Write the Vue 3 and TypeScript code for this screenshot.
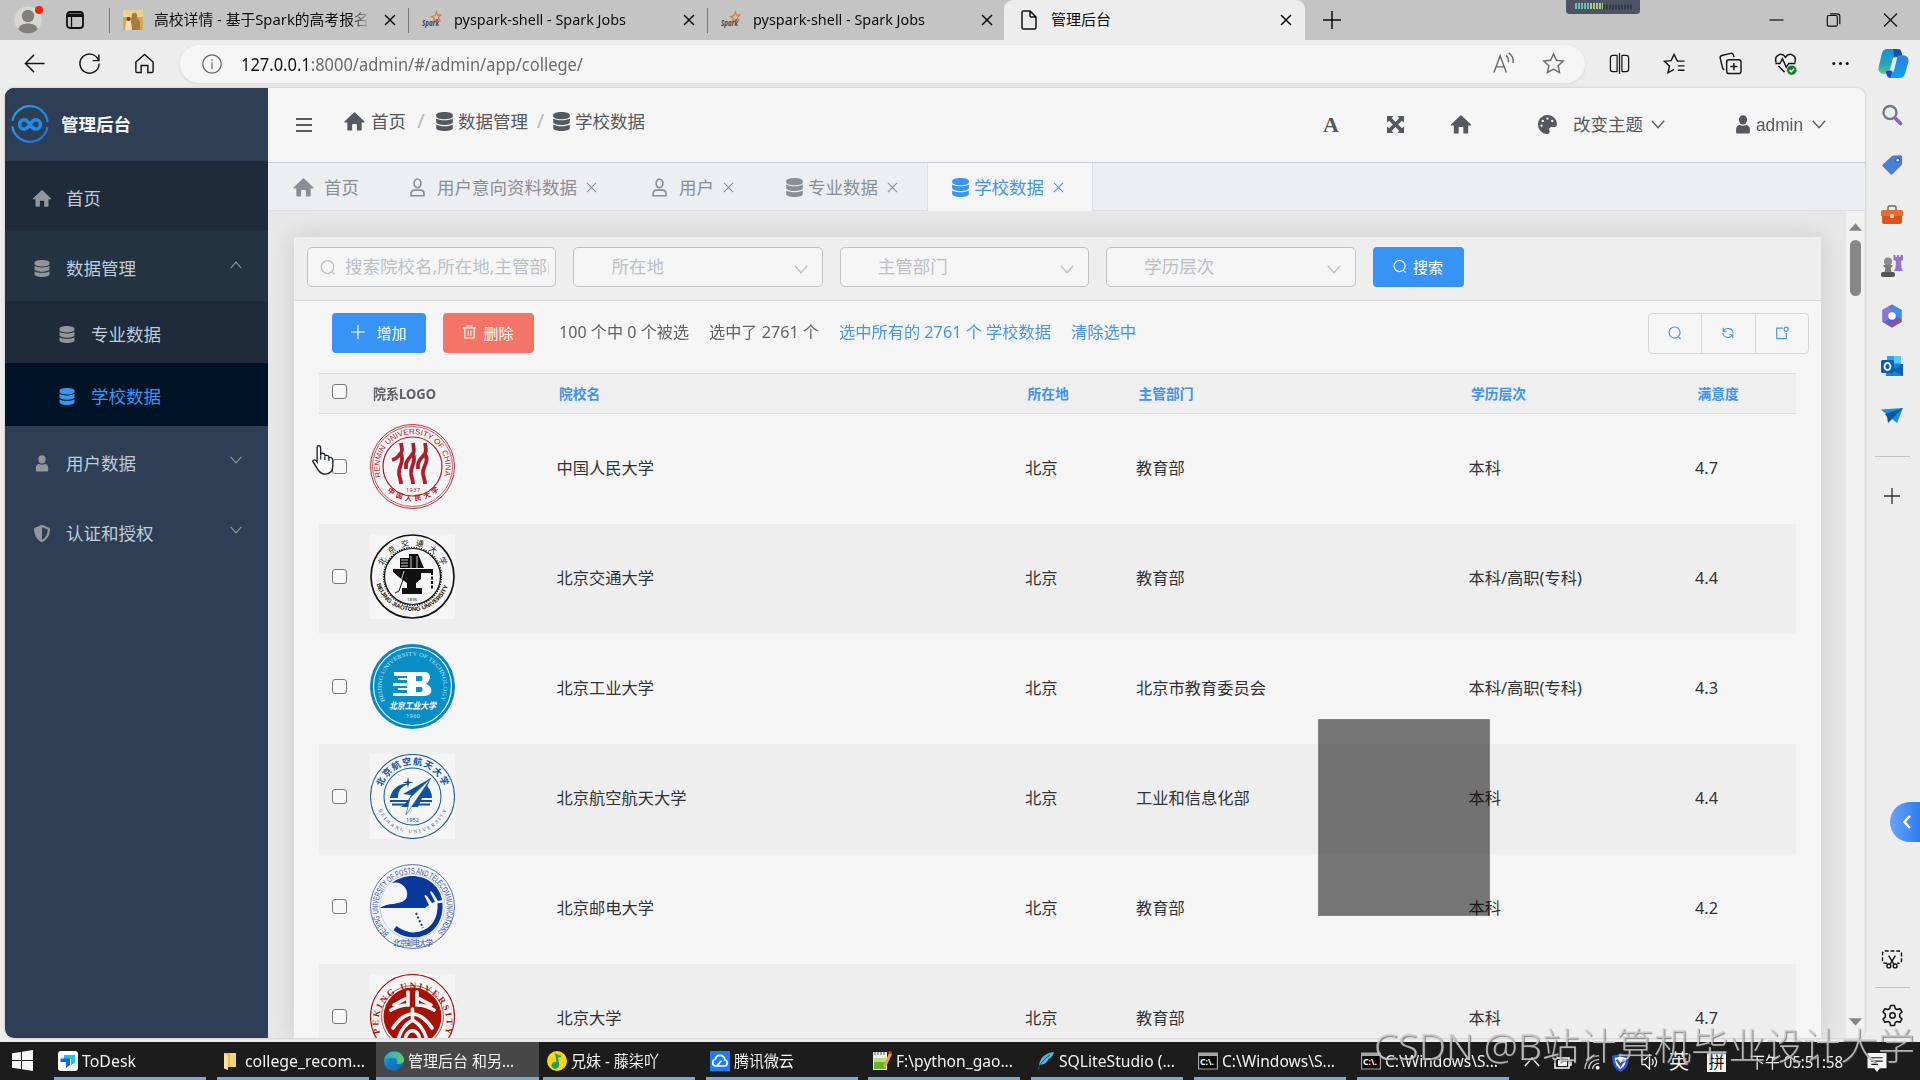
<script setup lang="ts">
import type { Directive } from 'vue'

// Condenses or widens a label so that it takes exactly the given number of pixels.
const vFit: Directive<HTMLElement, number> = {
  mounted(el, binding) {
    const natural = el.getBoundingClientRect().width
    if (!natural) return
    el.style.transform = `scaleX(${binding.value / natural})`
    el.style.marginRight = `${binding.value - natural}px`
  },
}

interface College { name: string; city: string; dept: string; level: string; score: string }
const colleges: College[] = [
  { name: '中国人民大学', city: '北京', dept: '教育部', level: '本科', score: '4.7' },
  { name: '北京交通大学', city: '北京', dept: '教育部', level: '本科/高职(专科)', score: '4.4' },
  { name: '北京工业大学', city: '北京', dept: '北京市教育委员会', level: '本科/高职(专科)', score: '4.3' },
  { name: '北京航空航天大学', city: '北京', dept: '工业和信息化部', level: '本科', score: '4.4' },
  { name: '北京邮电大学', city: '北京', dept: '教育部', level: '本科', score: '4.2' },
  { name: '北京大学', city: '北京', dept: '教育部', level: '本科', score: '4.7' },
]
const selects: string[] = ['所在地', '主管部门', '学历层次']

interface Task { icon: string; label: string; width: number; active?: boolean }
const tasks: Task[] = [
  { icon: 'todesk', label: 'ToDesk', width: 54 },
  { icon: 'folder', label: 'college_recom...', width: 120 },
  { icon: 'edge', label: '管理后台 和另...', width: 106, active: true },
  { icon: 'music', label: '兄妹 - 藤柒吖', width: 88 },
  { icon: 'cloud', label: '腾讯微云', width: 60 },
  { icon: 'notepad', label: 'F:\\python_gao...', width: 117 },
  { icon: 'feather', label: 'SQLiteStudio (...', width: 116 },
  { icon: 'cmd', label: 'C:\\Windows\\S...', width: 113 },
  { icon: 'cmd', label: 'C:\\Windows\\S...', width: 113 },
]
const railIcons: string[] = ['r-search', 'r-tag', 'r-tools', 'r-chess', 'r-office', 'r-outlook', 'r-plane']
</script>

<template>
  <div class="screen">
    <svg class="sprite" width="0" height="0">
      <defs>
        <linearGradient id="gLogo" x1="0" y1="0" x2="1" y2="1"><stop offset="0" stop-color="#25a5e0" /><stop offset="1" stop-color="#1e6fe6" /></linearGradient>
        <linearGradient id="gCop1" x1="0" y1="0" x2="0" y2="1"><stop offset="0" stop-color="#1390d8" /><stop offset=".6" stop-color="#2aa5b8" /><stop offset="1" stop-color="#5cc58b" /></linearGradient>
        <linearGradient id="gCop2" x1="0" y1="0" x2="0" y2="1"><stop offset="0" stop-color="#2f7fe0" /><stop offset="1" stop-color="#0aa2f5" /></linearGradient>
        <linearGradient id="gEdge" x1="0" y1="0" x2="1" y2="1"><stop offset="0" stop-color="#1fa3dd" /><stop offset="1" stop-color="#0c59a4" /></linearGradient>
        <linearGradient id="gEdge2" x1="0" y1="0" x2="1" y2="0"><stop offset="0" stop-color="#2aa8dd" /><stop offset="1" stop-color="#58d065" /></linearGradient>
      </defs>
      <symbol id="home" viewBox="0 0 24 24"><path d="M12 1.500a1.300 1.300 0 0 0-.9.4L.8 11.600c-.7.7-.4 1.500.6 1.500h2.400V21c0 .9.4 1.300 1.200 1.300h4.300v-6.600c0-.6.3-.9.9-.9h3.600c.6 0 .9.3.9.9v6.600H19c.8 0 1.200-.4 1.200-1.300v-7.900h2.400c1 0 1.300-.8.6-1.500L12.900 1.900a1.300 1.300 0 0 0-.9-.4z" /></symbol>
      <symbol id="db" viewBox="0 0 448 512"><path d="M448 73.143v45.714C448 159.143 347.667 192 224 192S0 159.143 0 118.857V73.143C0 32.857 100.333 0 224 0s224 32.857 224 73.143zM448 176v102.857C448 319.143 347.667 352 224 352S0 319.143 0 278.857V176c48.125 33.143 136.208 48.572 224 48.572S399.874 209.143 448 176zm0 160v102.857C448 479.143 347.667 512 224 512S0 479.143 0 438.857V336c48.125 33.143 136.208 48.572 224 48.572S399.874 369.143 448 336z" /></symbol>
      <symbol id="user" viewBox="0 0 16 22"><ellipse cx="8" cy="5.600" rx="4.700" ry="5.400" /><path d="M0 20v-3.500c0-3.200 2-4.700 4.500-4.900 2.200 1.200 4.800 1.200 7 0 2.500.2 4.500 1.700 4.500 4.900V20c0 1-.5 1.500-1.500 1.500h-13C.5 21.500 0 21 0 20z" /></symbol>
      <symbol id="userline" viewBox="0 0 18 22"><g fill="none" stroke="currentColor" stroke-width="1.900"><ellipse cx="9" cy="6.200" rx="4" ry="5" /><path d="M1.500 20.500v-2.200c0-2.600 1.500-4.300 4-4.300h7c2.500 0 4 1.700 4 4.300v2.200z" /></g></symbol>
      <symbol id="shield" viewBox="0 0 512 512"><path d="M466.500 83.700l-192-80a48.150 48.150 0 0 0-36.900 0l-192 80C27.700 91.100 16 108.600 16 128c0 198.500 114.500 335.700 221.500 380.300 11.800 4.900 25.100 4.900 36.900 0C360.100 472.600 496 349.300 496 128c0-19.400-11.700-36.900-29.500-44.300zM256.100 446.300l-.1-381 175.900 73.300c-3.300 151.400-82.100 261.100-175.800 307.700z" /></symbol>
      <symbol id="palette" viewBox="0 0 512 512"><path d="M204.300 5C104.900 24.400 24.800 104.300 5.200 203.400c-37 187 131.700 326.400 258.800 306.700 41.200-6.400 61.400-54.600 42.500-91.700-23.100-45.400 9.900-98.400 60.900-98.400h79.700c35.800 0 64.800-29.600 64.900-65.300C511.500 97.100 368.100-26.900 204.300 5zM96 320c-17.700 0-32-14.300-32-32s14.300-32 32-32 32 14.300 32 32-14.300 32-32 32zm32-128c-17.700 0-32-14.300-32-32s14.300-32 32-32 32 14.300 32 32-14.300 32-32 32zm128-64c-17.700 0-32-14.300-32-32s14.300-32 32-32 32 14.300 32 32-14.300 32-32 32zm128 64c-17.700 0-32-14.300-32-32s14.300-32 32-32 32 14.300 32 32-14.300 32-32 32z" /></symbol>
      <symbol id="expand" viewBox="0 0 18 18"><path d="M0 0h7L5 2.200 9 6.400l4-4.200L11 0h7v7l-2.200-2-4 4 4 4 2.200-2v7h-7l2-2.200-4-4.200-4 4.200L7 18H0v-7l2.200 2 4-4-4-4L0 7z" /></symbol>
      <symbol id="down" viewBox="0 0 14 9"><path d="M.8.8 7 7.800 13.200.8" fill="none" stroke="currentColor" stroke-width="1.300" /></symbol>
      <symbol id="up" viewBox="0 0 14 9"><path d="M.8 8.200 7 1.200 13.200 8.200" fill="none" stroke="currentColor" stroke-width="1.300" /></symbol>
      <symbol id="cross" viewBox="0 0 12 12"><path d="M1 1 11 11M11 1 1 11" fill="none" stroke="currentColor" stroke-width="1.500" /></symbol>
      <symbol id="thincross" viewBox="0 0 12 12"><path d="M1 1 11 11M11 1 1 11" fill="none" stroke="currentColor" stroke-width="1.200" /></symbol>
      <symbol id="lens" viewBox="0 0 16 16"><g fill="none" stroke="currentColor" stroke-width="1.300"><circle cx="7.500" cy="7.500" r="6.300" /><path d="M11.800 12.200 14.500 15" /></g></symbol>
      <symbol id="plus" viewBox="0 0 18 18"><path d="M9 0v18M0 9h18" fill="none" stroke="currentColor" stroke-width="1.500" /></symbol>
      <symbol id="spark" viewBox="0 0 20 20"><path d="m14.500 2 1 3.200 3.300-.2-2.400 2.500 1.500 3-3.100-1.100L12 11.500l.2-3.200-2.700-1.700 3.300-.9z" fill="none" stroke="#dc7a3c" stroke-width="1.200" /><text x="0" y="15.500" font-size="9" font-weight="bold" font-style="italic" fill="#44464a" textLength="17" lengthAdjust="spacingAndGlyphs">Spark</text></symbol>

      <symbol id="todesk" viewBox="0 0 20 20"><rect width="20" height="20" rx="3" fill="#fff" /><path d="M6 4h11v8l-4 2V8H6z" fill="#21c5d8" /><path d="M2.500 7.500H12V14l-4 3v-6H2.500z" fill="#1662f0" /></symbol>
      <symbol id="folder" viewBox="0 0 20 20"><path d="M3 2h10v14H3z" fill="#e9bd52" /><path d="M9 2h6v14H9z" fill="#f7d679" /><path d="m3 2 4 3v14l-4-1.500z" fill="#fbe29b" /></symbol>
      <symbol id="edge" viewBox="0 0 20 20"><circle cx="10" cy="10" r="10" fill="url(#gEdge)" /><path d="M.5 8C2-.5 18-3 20 8.500c.3 4-3.500 5.500-7.500 4.300 1.500-3 .5-6-4-6.300C5 6.400 2 7.500.5 10z" fill="url(#gEdge2)" /><path d="M7 10c-2 4 2 8.500 7.500 7.800C8 22 1.500 15 5.500 9c1-1.300 2-1.500 4-1.300-1.300.3-2 1-2.500 2.300z" fill="#1276c9" /></symbol>
      <symbol id="music" viewBox="0 0 20 20"><circle cx="10" cy="10" r="10" fill="#fbd512" /><path d="M8 1.500c2.500 3 4.500 3 6 2.800v2c-1.300.2-2 .1-3-.3l1.200 7.500c.3 5.500-7.700 5.500-7.700.8 0-3 2.800-4.100 5-3.300z" fill="#1e9f61" /></symbol>
      <symbol id="cloud" viewBox="0 0 20 20"><rect width="20" height="20" fill="#1c7cf2" /><path d="M6 15h8c4 0 4.300-5.200 1-6C14 3 6.500 3 5.500 8 1.500 9 2 15 6 15c3 0 3-5 6-5" fill="none" stroke="#fff" stroke-width="1.700" /></symbol>
      <symbol id="notepad" viewBox="0 0 20 20"><path d="M1 1h14v18H1z" fill="#eef0e4" /><path d="M2 9h12v9H2z" fill="#65b529" /><path d="M2 7h12v4H2z" fill="#bcdc82" /><path d="M3 1v3m3-3v3m3-3v3m3-3v3" stroke="#555" /><path d="m17 2 3 1-6 13-2 2v-4z" fill="#f1a32a" /><path d="m17 0 3 1-.8 2L16.500 2z" fill="#d43a2f" /></symbol>
      <symbol id="feather" viewBox="0 0 20 20"><path d="M19 1C10 2 5 7 4 14c6 0 9-4 9.500-6l1.500-.5C17 6 18 4 19 1z" fill="#55b6dc" /><path d="M15 4C9 8 5 12 3 19" stroke="#19577c" fill="none" /></symbol>
      <symbol id="cmd" viewBox="0 0 20 20"><rect y="1.500" width="20" height="17" fill="#a6a6a6" /><rect x="1.200" y="5" width="17.600" height="12.500" fill="#050505" /><text x="2" y="14" font-size="8" font-weight="bold" fill="#fff" textLength="14" lengthAdjust="spacingAndGlyphs">C:\.</text></symbol>

      <symbol id="r-search" viewBox="0 0 22 22"><circle cx="9" cy="8.500" r="6.500" fill="#e9edf2" stroke="#747a80" stroke-width="2.400" /><path d="m14 14 5.500 5.500" stroke="#8c62c9" stroke-width="3.600" stroke-linecap="round" /></symbol>
      <symbol id="r-tag" viewBox="0 0 22 22"><path d="m12.500 1.500 7-.2c1 0 1.700.7 1.700 1.700l-.1 6.500c0 .7-.2 1.300-.7 1.800l-8.900 8.900c-.6.6-1.400.6-2 0L1.800 12.500c-.6-.6-.6-1.500 0-2.100l9-8.200c.5-.5 1-.7 1.700-.7z" fill="#4b7ed8" /><circle cx="16.700" cy="6.200" r="2" fill="#dfe9fb" stroke="#224a9c" /></symbol>
      <symbol id="r-tools" viewBox="0 0 22 22"><path d="M7 6V3.500C7 2.500 7.500 2 8.500 2h5c1 0 1.500.5 1.500 1.500V6" fill="none" stroke="#6b6b6b" stroke-width="1.600" /><path d="M1 11h20v7c0 1.300-.7 2-2 2H3c-1.300 0-2-.7-2-2z" fill="#d8551c" /><path d="M0 8c0-1.300.7-2 2-2h18c1.300 0 2 .7 2 2v4H0z" fill="#ee6a28" /><rect x="9" y="10" width="4" height="4" rx="1" fill="#ffc9a5" /></symbol>
      <symbol id="r-chess" viewBox="0 0 22 22"><path d="M12.500 0h2v2h1.500V0h2v2h1.500V0H22v5l-2 1 .5 7 1.500 3h-9l1.500-3L15 6l-2.500-1z" fill="#9a70cb" /><circle cx="7" cy="6.500" r="4" fill="#8d8d8d" /><path d="M2.500 10h9v1.500L9.500 13l1 4H3.500l1-4-2-1.500z" fill="#7a7a7a" /><rect y="17" width="14" height="5" rx="2" fill="#555" /></symbol>
      <symbol id="r-office" viewBox="0 0 22 24"><path d="M11 .5 20.500 6v12L11 23.500 1.500 18V6z" fill="#5a62cf" /><path d="M11 .5 20.500 6v9l-6.500-3-3-4-2 1z" fill="#3f8fe6" /><path d="M1.500 18V6L9 1.500l2 6.500-4 4v4z" fill="#8d74d4" /><path d="M20.500 15v3L11 23.500 5 20l9-3.500z" fill="#8a4fae" /><circle cx="11" cy="12" r="3.800" fill="#fff" /></symbol>
      <symbol id="r-outlook" viewBox="0 0 22 22"><path d="M6 1h14v10H6z" fill="#2aa6ea" /><path d="M13 1h7v7h-7z" fill="#54cdf5" /><path d="M5 9h17v12H5z" fill="#1583d6" /><path d="m22 9-10 6 10 6z" fill="#0c62b0" /><rect y="5" width="13" height="13" rx="1.500" fill="#0a5eb6" /><ellipse cx="6.500" cy="11.500" rx="3" ry="3.500" fill="none" stroke="#fff" stroke-width="1.800" /></symbol>
      <symbol id="r-plane" viewBox="0 0 22 22"><path d="M0 4.500 22 3l-6 15-5-4z" fill="#1d8de0" /><path d="m4 9 18-6L7 18l-1-6z" fill="#0c5a9e" /><path d="m7 18 15-15-11 11z" fill="#3fb5f2" /></symbol>
    </svg>

    <header class="tabbar">
      <svg class="avatar" viewBox="0 0 28 28"><circle cx="14" cy="14" r="13.500" fill="#d9d7d1" /><circle cx="14" cy="10" r="6.200" fill="#82807c" /><path d="M4.500 23.500c0-8 19-8 19 0a13.500 13.500 0 0 1-19 0z" fill="#82807c" /><circle cx="25" cy="4" r="4" fill="#ee2211" /></svg>
      <svg class="workspace" viewBox="0 0 18 18"><rect x="1" y="1" width="16" height="16" rx="3" fill="none" stroke="#111" stroke-width="1.800" /><path d="M1 2.500h16V6H1z" fill="#111" /><path d="M5.500 6v11" stroke="#111" stroke-width="1.300" /></svg>
      <i class="bar"></i>
      <div class="tab">
        <svg class="fav" viewBox="0 0 20 20"><rect width="20" height="20" fill="#dba453" /><path d="M0 0h20v7H0z" fill="#efd092" /><path d="M9 4c3-3 6 0 5 3l3 5v8H9l-1-9z" fill="#a77a3e" /><path d="M3 12c2-4 4-4 5 0l1 8H2z" fill="#f5dfae" /><circle cx="5.500" cy="9" r="2" fill="#6b4524" /></svg>
        <span class="title fade">高校详情 - 基于Spark的高考报名</span>
        <svg class="x"><use href="#cross" /></svg>
      </div>
      <div v-for="n in 2" :key="n" class="tab" :class="{ last: n === 2 }">
        <svg class="fav"><use href="#spark" /></svg>
        <span class="title"><span v-fit="172" class="fit">pyspark-shell - Spark Jobs</span></span>
        <svg class="x"><use href="#cross" /></svg>
      </div>
      <div class="tab active">
        <svg class="doc" viewBox="0 0 16 20"><path d="M1 2.500C1 1.500 1.500 1 2.500 1H9l6 6v10.500c0 1-.5 1.500-1.500 1.500h-11C1.500 19 1 18.500 1 17.500zM9 1v4.500C9 6.500 9.500 7 10.500 7H15" fill="none" stroke="#111" stroke-width="1.500" /></svg>
        <span class="title">管理后台</span>
        <svg class="x"><use href="#cross" /></svg>
      </div>
      <svg class="newtab"><use href="#plus" /></svg>
      <div class="winctl">
        <svg viewBox="0 0 14 14"><path d="M0 7h14" stroke="#111" stroke-width="1.200" /></svg>
        <svg viewBox="0 0 14 14"><g fill="none" stroke="#111" stroke-width="1.200"><rect x=".8" y="2.500" width="10" height="10.700" rx="1.500" /><path d="M3.500.8h7.300c1.700 0 2.500.8 2.500 2.500v8" /></g></svg>
        <svg viewBox="0 0 14 14"><path d="m.5.5 13 13m0-13-13 13" stroke="#111" stroke-width="1.200" /></svg>
      </div>
    </header>

    <div class="addressbar">
      <div class="nav"><svg viewBox="0 0 24 24"><path d="M22.500 12H2.500M11.500 3 2.500 12l9 9" /></svg></div>
      <div class="nav"><svg viewBox="0 0 24 24"><path d="M21.500 9A10 10 0 1 0 22 12M21.800 2.500V9h-6.500" /></svg></div>
      <div class="nav"><svg viewBox="0 0 24 24"><path d="M3 10.500 12 2.500l9 8V20c0 .8-.4 1.300-1.200 1.300h-4.300V14h-7v7.300H4.200c-.8 0-1.200-.5-1.200-1.300z" /></svg></div>
      <div class="pill">
        <svg class="info" viewBox="0 0 20 20"><g fill="none" stroke="#666" stroke-width="1.200"><circle cx="10" cy="10" r="9.200" /><path d="M10 8.500V15M10 5v1.700" /></g></svg>
        <span v-fit="342" class="fit url"><b>127.0.0.1</b>:8000/admin/#/admin/app/college/</span>
        <div class="cell first"><svg viewBox="0 0 24 24"><path d="M2 21.500 8.500 4 15 21.500M4.500 15.500h8M14.500 3.500c2 1.500 3 4 2.500 7M17.500 1c3.500 2.500 5 6 4.500 10.500" /></svg></div>
        <div class="cell"><svg viewBox="0 0 24 24"><path d="m12 2 3 6.600 7.200.8-5.400 4.900 1.500 7.200L12 17.900l-6.300 3.600 1.500-7.200L1.800 9.400 9 8.600z" /></svg></div>
      </div>
      <div class="tool lead"><svg viewBox="0 0 24 24"><path d="M9.500 3.500H5c-1.500 0-2.500 1-2.500 2.500v12c0 1.500 1 2.500 2.500 2.500h4.500M14.500 3.500H19c1.500 0 2.500 1 2.500 2.500v12c0 1.500-1 2.500-2.500 2.500h-4.500M9.500 3.500v17M14.500 3.500v17M12 1v22" stroke-width="1.300" /></svg></div>
      <div class="tool"><svg viewBox="0 0 24 24"><path d="M22.500 9.500H15l-3.500-7-3 6.500-7 .8 5.200 4.800-1.400 7 6.200-3.500M15.500 14.500h7M15.500 19h7M17 9.500h5.500" /></svg></div>
      <div class="tool"><svg viewBox="0 0 24 24"><rect x="8" y="8" width="15" height="14.500" rx="2.500" /><path d="M15.500 11.500v7.500M11.800 15.200h7.500M5.500 18.500C4.300 18 3.800 17.300 3.600 16L1.200 6.500C1 5 1.500 4 3 3.600L12 1.400c1.500-.3 2.500.3 3 1.600l.8 2.500" /></svg></div>
      <div class="tool"><svg viewBox="0 0 24 24"><path d="M2.300 11C-.5 3.500 8-.5 12 5.500c4-6 12.500-2 9.700 5.500M1.500 12h4.700l2.600-5 4 9 2.500-4h7M4.500 14.500l6.500 6.500" /><circle cx="18.500" cy="19" r="5" fill="#16802a" stroke="none" /><path d="m16.300 19 1.700 1.700 3-3.200" stroke="#fff" /></svg></div>
      <div class="tool"><svg viewBox="0 0 24 24"><g fill="#111" stroke="none"><circle cx="5" cy="12" r="1.600" /><circle cx="12" cy="12" r="1.600" /><circle cx="19" cy="12" r="1.600" /></g></svg></div>
      <div class="copilot"><svg viewBox="0 0 30 30"><path d="M15 1h3c3 0 4 1.500 4.500 4l.7 3h-5L11 25H6c-4 0-6-3-5.500-6L3.500 6C4.500 2.500 6 1 9 1z" fill="url(#gCop1)" /><path d="M14.500 1H19c2.500 0 3.300 1.500 4 4l.8 4h-8z" fill="#1452a0" /><path d="M19 7h5c4 0 6 3 5.500 6l-3 11c-1 3.500-2.500 5-5.500 5h-9c-2.500 0-3-1.500-3.500-4L15 23z" fill="url(#gCop2)" /><path d="M7.500 22 14 22l-2 7c-2.500 0-3.500-2-4-4z" fill="#2343d0" /><path d="m14.500 9.500 4-.5-3 12-4 .5z" fill="#e5f1fa" /></svg></div>
    </div>

    <div class="middle">
      <div class="page">
        <aside class="side">
          <div class="brand">
            <svg viewBox="0 0 38 38"><circle cx="19" cy="19" r="17.800" fill="none" stroke="url(#gLogo)" stroke-width="2.200" stroke-dasharray="50 5.900" stroke-dashoffset="-3" /><path d="M19 19.500c-2.200-3.700-4-4.700-5.800-4.700a4.600 4.600 0 0 0 0 9.200c2.300 0 3.600-1.300 5.800-4.500s3.500-4.700 5.800-4.700a4.600 4.600 0 0 1 0 9.200c-2.300 0-4-1.300-5.800-4.500z" fill="none" stroke="#1d8cea" stroke-width="3.600" /></svg>
            <strong>管理后台</strong>
          </div>
          <div class="item dark"><svg class="mi"><use href="#home" /></svg><span>首页</span></div>
          <div class="item open"><svg class="mi db"><use href="#db" /></svg><span>数据管理</span><svg class="arr"><use href="#up" /></svg></div>
          <div class="item sub"><svg class="mi db"><use href="#db" /></svg><span>专业数据</span></div>
          <div class="item sub current"><svg class="mi db"><use href="#db" /></svg><span>学校数据</span></div>
          <div class="item"><svg class="mi db"><use href="#user" /></svg><span>用户数据</span><svg class="arr"><use href="#down" /></svg></div>
          <div class="item"><svg class="mi db"><use href="#shield" /></svg><span>认证和授权</span><svg class="arr"><use href="#down" /></svg></div>
        </aside>

        <section class="main">
          <div class="top">
            <svg class="burger" viewBox="0 0 16 16"><path d="M0 2h16M0 8h16M0 14h16" stroke="#55585e" stroke-width="2.200" /></svg>
            <nav class="crumbs">
              <svg class="hm"><use href="#home" /></svg><span class="first">首页</span><i>/</i>
              <svg class="dbi"><use href="#db" /></svg><span>数据管理</span><i class="tight">/</i>
              <svg class="dbi"><use href="#db" /></svg><span>学校数据</span>
            </nav>
            <div class="acts">
              <span class="glyph">A</span>
              <svg class="exp"><use href="#expand" /></svg>
              <svg class="hm2"><use href="#home" /></svg>
              <svg class="pal"><use href="#palette" /></svg>
              <span class="theme">改变主题</span><svg class="dn"><use href="#down" /></svg>
              <svg class="usr"><use href="#user" /></svg>
              <span class="adm"><span v-fit="47" class="fit">admin</span></span><svg class="dn d2"><use href="#down" /></svg>
            </div>
          </div>
          <div class="pagetabs">
            <div class="pt p1"><svg class="hm"><use href="#home" /></svg><span>首页</span></div>
            <div class="pt p2"><svg class="us"><use href="#userline" /></svg><span>用户意向资料数据</span><svg class="cx"><use href="#thincross" /></svg></div>
            <div class="pt p3"><svg class="us"><use href="#userline" /></svg><span>用户</span><svg class="cx"><use href="#thincross" /></svg></div>
            <div class="pt p4"><svg class="dbi"><use href="#db" /></svg><span>专业数据</span><svg class="cx"><use href="#thincross" /></svg></div>
            <div class="pt p5"><svg class="dbi"><use href="#db" /></svg><span>学校数据</span><svg class="cx"><use href="#thincross" /></svg></div>
          </div>

          <div class="scroller">
            <div class="card">
              <div class="search">
                <div class="field"><svg class="ln"><use href="#lens" /></svg><span>搜索院校名,所在地,主管部门</span></div>
                <div v-for="s in selects" :key="s" class="field sel"><span>{{ s }}</span><svg class="fd"><use href="#down" /></svg></div>
                <button class="btn go"><svg class="ln"><use href="#lens" /></svg>搜索</button>
              </div>
              <div class="ops">
                <button class="btn add"><svg><use href="#plus" /></svg>增加</button>
                <button class="btn del"><svg viewBox="0 0 14 15"><path d="M0 3h14M4.500 3V1h5v2M2 3v11h10V3M5.500 6v5.500M8.500 6v5.500" fill="none" stroke="#fff" stroke-width="1.200" /></svg>删除</button>
                <span class="t1"><span v-fit="130" class="fit">100 个中 0 个被选</span></span>
                <span class="t2"><span v-fit="110" class="fit">选中了 2761 个</span></span>
                <a class="t3"><span v-fit="212" class="fit">选中所有的 2761 个 学校数据</span></a>
                <a class="t4">清除选中</a>
                <div class="group">
                  <span><svg><use href="#lens" /></svg></span>
                  <span><svg viewBox="0 0 16 16"><g fill="none" stroke="currentColor" stroke-width="1.300"><path d="M2.500 2v4h4M2.800 6A6 6 0 0 1 14 8M13.500 14v-4h-4M13.200 10A6 6 0 0 1 2 8" /></g></svg></span>
                  <span><svg viewBox="0 0 16 16"><g fill="none" stroke="currentColor" stroke-width="1.300"><path d="M9 2.500H2v12h11V8" /><circle cx="12.800" cy="3.700" r="2.400" /></g></svg></span>
                </div>
              </div>
              <div class="table">
                <div class="row head">
                  <i class="check"></i><b><span v-fit="63" class="fit">院系LOGO</span></b><b class="lk">院校名</b><b class="lk">所在地</b><b class="lk">主管部门</b><b class="lk">学历层次</b><b class="lk">满意度</b>
                </div>
                <div v-for="(c, i) in colleges" :key="c.name" class="row data" :class="{ even: i % 2 }">
                  <i class="check"></i>
                  <div class="logo" :class="{ boxed: i % 2 }">
                    <svg v-if="i === 0" viewBox="0 0 85 85" color="#b0182b">
                      <g fill="none" stroke="#b0182b"><circle cx="42.500" cy="42.500" r="42" stroke-width=".9" /><circle cx="42.500" cy="42.500" r="40" stroke-width=".7" /><circle cx="42.500" cy="42.500" r="29.500" stroke-width="1.200" /></g>
                      <path id="p1" d="M11 53A33 33 0 1 1 74 53" fill="none" /><text font-size="7.600" font-family="Liberation Sans"><textPath href="#p1" startOffset="0" textLength="122" lengthAdjust="spacingAndGlyphs">RENMIN UNIVERSITY OF CHINA</textPath></text>
                      <path id="p1b" d="M15 65A38 38 0 0 0 70 65" fill="none" /><text font-size="7" font-weight="bold"><textPath href="#p1b" startOffset="3" textLength="57">中国人民大学</textPath></text>
                      <path d="M31 19c1 6 2 8-1 11-2 3-4 5-8 6M31 30c4 8-3 12-2 20 1 5 2 6 2 10M43 19c1 7 2 9-2 13-6 6-5 9-5 13M43 30c4 8-3 12-2 20 1 5 2 6 2 10M55 19c1 7 2 9-2 13-6 6-5 9-5 13M55 30c5 8-3 12-2 20 1 5 2 6 2 10" fill="none" stroke="#a8202f" stroke-width="3.800" />
                      <text x="36" y="67.500" font-size="5.500" textLength="14">1937</text>
                    </svg>
                    <svg v-else-if="i === 1" viewBox="0 0 85 85" color="#111">
                      <g fill="none" stroke="#111"><circle cx="42.500" cy="42.500" r="41.500" stroke-width="1.700" /><circle cx="42.500" cy="42.500" r="28" stroke-width="1.200" /><circle cx="42.500" cy="42.500" r="29" stroke-width="1.400" stroke-dasharray="1.200 1.300" /></g>
                      <path id="p2" d="M13 32A31.500 31.500 0 0 1 72 32" fill="none" /><text font-size="8"><textPath href="#p2" startOffset="0" textLength="76">北京交通大学</textPath></text>
                      <path id="p2b" d="M6.500 50A37.500 37.500 0 0 0 78.500 50" fill="none" /><text font-size="6" font-weight="bold" font-family="Liberation Sans"><textPath href="#p2b" startOffset="0" textLength="94">BEIJING JIAOTONG UNIVERSITY</textPath></text>
                      <path d="M30 24h9v-4h9l6 14H30zM23 35h40v4H51v6l-5 4v5h6v6H32v-6h5v-5l-7-5-7-6z" /><path d="M31 26h7M31 29h7M31 32h7M41 22v12M47 22v12M34 37l-6 20" stroke="#f5f5f5" stroke-width=".8" /><path d="m36 37-7 20-4 2" fill="none" stroke="#111" /><path d="M62 38v17" stroke="#111" stroke-width="2" stroke-dasharray="3 1.500" /><text x="37" y="67" font-size="4" textLength="10">1896</text>
                    </svg>
                    <svg v-else-if="i === 2" viewBox="0 0 85 85" color="#fff">
                      <circle cx="42.500" cy="42.500" r="42.500" fill="#0b86b8" /><circle cx="42.500" cy="42.500" r="39" fill="#078fc6" stroke="#e8f5fa" stroke-width="1.200" />
                      <path id="p3" d="M15 57A31 31 0 1 1 70 57" fill="none" /><text font-size="5.600" fill="#bfe3f0" font-family="Liberation Serif"><textPath href="#p3" startOffset="0" textLength="126" lengthAdjust="spacingAndGlyphs">BEIJING UNIVERSITY OF TECHNOLOGY</textPath></text>
                      <path d="M24 28h31c7 0 6 9 1 12 8 3 7 12-2 12H23v-3h14v-3h-9v-2h9v-2H23v-3h14v-3h-9v-2h9v-2H24z" /><path d="M46 32h5c2 0 2 5 0 5h-5zM46 43h5c2 0 2 5 0 5h-5z" fill="#078fc6" /><text x="19" y="65" font-size="9" font-weight="bold" font-style="italic" textLength="47" lengthAdjust="spacingAndGlyphs">北京工业大学</text><text x="36" y="74" font-size="5.500" textLength="14" fill="#c6e5f0">1960</text>
                    </svg>
                    <svg v-else-if="i === 3" viewBox="0 0 85 85" color="#10529a">
                      <g fill="none" stroke="#23609a"><circle cx="42.500" cy="42.500" r="42" stroke-width="1.100" /><circle cx="42.500" cy="42.500" r="28.500" stroke-width="1.100" /></g>
                      <path id="p4" d="M12 33A32 32 0 0 1 73 33" fill="none" /><text font-size="9" font-weight="bold"><textPath href="#p4" startOffset="0" textLength="80">北京航空航天大学</textPath></text>
                      <path id="p4b" d="M7.500 53A36.500 36.500 0 0 0 77.500 53" fill="none" /><text font-size="5" font-family="Liberation Serif"><textPath href="#p4b" startOffset="3" textLength="87">BEIHANG UNIVERSITY</textPath></text>
                      <path d="M20 44c2-10 10-15 19-14-8 2-11 7-11 14zM62 44c0-5-2-9-5-12l-6 12zM20 46h42v2H20zM22 49.500h38v2H22z" /><path d="m38 23 1 4.500 4.500 1-4.500 1-1 4.500-1-4.500-4.500-1 4.500-1zM61 24 48 53H31c3-2 8-7 10-12l-8-1z" /><path d="M61 24 36 61l4-17z" fill="#f5f5f5" stroke="#23609a" stroke-width=".6" /><text x="36" y="68" font-size="5.600" textLength="13">1952</text>
                    </svg>
                    <svg v-else-if="i === 4" viewBox="0 0 85 85" color="#08399a">
                      <circle cx="42.500" cy="42.500" r="42" fill="none" stroke="#5b74bd" stroke-width="1" /><circle cx="42.500" cy="42.500" r="32.500" fill="none" stroke="#a8b3d8" stroke-width=".6" />
                      <path id="p5" d="M19 69.500A34.500 34.500 0 1 1 66 69.500" fill="none" /><text font-size="8.500" fill="#33509f" font-family="Liberation Sans"><textPath href="#p5" startOffset="0" textLength="163" lengthAdjust="spacingAndGlyphs">BEIJING UNIVERSITY OF POSTS AND TELECOMMUNICATIONS</textPath></text>
                      <text x="23" y="81.500" font-size="7.500" fill="#33509f" textLength="40">北京邮电大学</text>
                      <path d="M22 19C40 5 68 13 72 36l-4 1-5-8c-2-3-4-2-2 1l4 8-3 1-5-7c-2-2-3-1-2 1l4 8-4 3H10c8-6 19-2 26-9 5-10-6-19-14-16z" /><path d="M70 39C72 69 43 79 25 64" fill="none" stroke="#08399a" stroke-width="5" /><path d="m46 49 7 15" stroke="#08399a" stroke-width="2" stroke-dasharray="2 2" />
                    </svg>
                    <svg v-else viewBox="0 0 85 85" color="#a51208">
                      <circle cx="42.500" cy="42.500" r="42" fill="none" stroke="#a51208" stroke-width="1.200" /><circle cx="42.500" cy="42.500" r="31" fill="none" stroke="#a51208" stroke-width=".7" /><circle cx="42.500" cy="42.500" r="29" />
                      <path id="p6" d="M10.500 60A34 34 0 1 1 74.500 60" fill="none" /><text font-size="9" font-weight="bold" font-family="Liberation Serif"><textPath href="#p6" startOffset="1" textLength="128">PEKING UNIVERSITY</textPath></text>
                      <path d="M38 18v13c-7 0-12 2-17 5M35 25l-11 6M47 18v13c7 0 12 2 17 5M50 25l11 6M42.500 35v11M41 40c-7 1-12 5-18 14M44 40c7 1 12 5 18 14M41 47c-5 3-9 7-12 16M44 47c5 3 9 7 12 16M35 68c0-15 15-15 15 0" fill="none" stroke="#f5f5f5" stroke-width="3.600" stroke-linecap="round" />
                    </svg>
                  </div>
                  <span>{{ c.name }}</span><span>{{ c.city }}</span><span>{{ c.dept }}</span><span>{{ c.level }}</span><span>{{ c.score }}</span>
                </div>
              </div>
            </div>
            <div class="vbar">
              <svg viewBox="0 0 14 8"><path d="M0 8 7 0l7 8z" fill="#858585" /></svg>
              <i></i>
              <svg class="dnarr" viewBox="0 0 14 8"><path d="M0 0h14L7 8z" fill="#858585" /></svg>
            </div>
          </div>
        </section>
      </div>

      <aside class="rail">
        <div v-for="r in railIcons" :key="r" class="ri"><svg><use :href="'#' + r" /></svg></div>
        <hr class="h1">
        <svg class="rp"><use href="#plus" /></svg>
        <svg class="snip" viewBox="0 0 22 20"><g fill="none" stroke="#111" stroke-width="1.500"><path d="M6 14H4c-2 0-3-1-3-3V4c0-2 1-3 3-3h14c2 0 3 1 3 3v7c0 2-1 3-3 3h-1.500" stroke-dasharray="4 2" /><path d="m7.500 6 5.500 9M14.500 6 9 15" /><circle cx="7.700" cy="16.800" r="2" /><circle cx="14.300" cy="16.800" r="2" /></g></svg>
        <hr class="h2">
        <svg class="gear" viewBox="0 0 24 24"><g fill="none" stroke="#111" stroke-width="1.600"><path d="M10 1.500h4l.8 3.200 1.900 1.100 3.200-.9 2 3.500-2.400 2.200v2.800l2.400 2.200-2 3.500-3.200-.9-1.900 1.100-.8 3.200h-4l-.8-3.200-1.900-1.100-3.200.9-2-3.500 2.400-2.200v-2.800L2.100 8.400l2-3.500 3.200.9 1.900-1.100z" stroke-linejoin="round" /><circle cx="12" cy="12" r="2.800" /></g></svg>
      </aside>
    </div>

    <footer class="taskbar">
      <svg class="win" viewBox="0 0 20 20"><path d="M0 3 8.500 1.800v7.700H0zM9.500 1.600 20 0v9.500H9.500zM0 10.500h8.500v7.700L0 17zM9.500 10.500H20V20L9.500 18.400z" fill="#f4f4f4" /></svg>
      <div v-for="(t, i) in tasks" :key="i" class="task" :class="{ on: t.active }">
        <svg><use :href="'#' + t.icon" /></svg><span v-fit="t.width" class="fit">{{ t.label }}</span>
      </div>
      <div class="tray">
        <svg class="t-up" viewBox="0 0 16 10"><path d="m1 9 7-8 7 8" fill="none" stroke="#eee" stroke-width="1.400" /></svg>
        <svg class="t-bat" viewBox="0 0 20 16"><path d="M5 4h12v10H3V9M17 7h2v4h-2" fill="none" stroke="#fff" stroke-width="1.500" /><path d="M6 6h9v6H6z" fill="#fff" /><path d="M1 1v4h4V1M3 5v4" stroke="#fff" fill="none" /></svg>
        <svg class="t-wifi" viewBox="0 0 18 16"><g fill="none" stroke="#c9c9c9" stroke-width="1.400"><path d="M1 15A14 14 0 0 1 16 1M5 15A10 10 0 0 1 16 5M9 15a6.500 6.500 0 0 1 7-6" /></g><circle cx="14.500" cy="13.500" r="2" fill="#fff" /></svg>
        <svg class="t-sh" viewBox="0 0 18 20"><path d="M9 0c3 2 6 2.500 9 2.500C18 12 15 17 9 20 3 17 0 12 0 2.500 3 2.500 6 2 9 0z" fill="#2a56d8" /><path d="M9 3c2 1.300 4 1.800 6 2-.3 6-2 9.500-6 12-4-2.500-5.700-6-6-12 2-.2 4-.7 6-2z" fill="#fff" /><path d="m5 7 4 6 4-6" fill="none" stroke="#2a56d8" stroke-width="2.500" /></svg>
        <svg class="t-vol" viewBox="0 0 18 16"><g fill="none" stroke="#eee" stroke-width="1.300"><path d="M1 5.500h3L8.500 1v14L4 10.500H1zM11 5c1.500 2 1.500 4 0 6M13.500 3c2.500 3 2.500 7 0 10" /></g></svg>
        <span class="en">英</span><span class="py">拼</span>
        <span class="clock"><span v-fit="93" class="fit">下午 05:51:58</span></span>
        <svg class="t-msg" viewBox="0 0 20 20"><path d="M0 0h20v16h-7l-3 4-3-4H0z" fill="#f5f5f5" /><path d="M4 5h12M4 8.500h12M4 12h7" stroke="#1c1c1c" stroke-width="1.300" /></svg>
      </div>
    </footer>

    <div class="shade"></div>
    <svg class="meter" viewBox="0 0 74 14"><path d="M0 0h74v10c0 3-1 4-4 4H4c-3 0-4-1-4-4z" fill="#4d5464" /><path d="M9 6h15" stroke="#6bbcb4" stroke-width="6" stroke-dasharray="2 1" /><path d="M24 6h13" stroke="#a9cc7c" stroke-width="6" stroke-dasharray="2 1" /><path d="M37 7h29" stroke="#353a47" stroke-width="5" stroke-dasharray="2 1" /></svg>
    <svg class="hand" viewBox="0 0 22 30"><path d="M7 1.500c1.500 0 2.200.8 2.200 2.300v7l.3-1.600c3-.8 3.700.4 3.900 2 3-.7 3.600.4 3.800 1.900 2.500-.4 3.800.6 3.800 3v5c0 5-2 8-7.500 8-4 0-6-2-8-6l-4-6.500c1-2 3-1.300 4.300.7V3.800C5.800 2.300 6 1.500 7 1.500z" fill="#fafafa" stroke="#1d2030" stroke-width="1.300" /><path d="M9.300 11v4M13.300 12v3.500M17.200 13v3.500" stroke="#1d2030" stroke-width="1.200" /></svg>
    <div class="pull"><svg viewBox="0 0 8 14"><path d="M7 1 1.500 7 7 13" fill="none" stroke="#fff" stroke-width="2.400" /></svg></div>
    <div class="mark"><span v-fit="168" class="fit">CSDN @B</span><span v-fit="373" class="fit">站计算机毕业设计大学</span></div>
  </div>
</template>

<style>
body { margin: 0; overflow: hidden; background: #ededed; }
</style>

<style scoped>
.screen { position: relative; width: 1920px; height: 1080px; overflow: hidden; display: flex; flex-direction: column; font-family: "Noto Sans", "Noto Sans CJK SC", sans-serif; font-size: 17.5px; color: #55585e; background: #ededed; }
.screen * { box-sizing: border-box; }
svg { display: block; flex: none; fill: currentColor; }
.sprite { position: absolute; }
.fit { display: inline-block; transform-origin: 0 50%; white-space: pre; flex: none; }
i { font-style: normal; }
button { border: 0; margin: 0; padding: 0; font: inherit; }

.tabbar { height: 40px; flex: none; display: flex; align-items: center; background: #c4c4c4; color: #0c0c0c; font-size: 15px; }
.avatar { width: 28px; height: 28px; margin-left: 14px; overflow: visible; }
.workspace { width: 18px; height: 18px; margin-left: 24px; }
.bar { width: 1px; height: 25px; background: #777; margin-left: 25px; }
.tab { position: relative; width: 299px; height: 40px; padding: 0 13px; display: flex; align-items: center; }
.tab:not(.last):not(.active)::after { content: ""; position: absolute; right: 0; top: 8px; width: 1px; height: 25px; background: #777; }
.tab.last { width: 296px; padding-right: 11px; }
.tab.active { width: 301px; padding-left: 17px; background: #ededed; border-radius: 9px 9px 0 0; }
.fav { width: 20px; height: 20px; margin-right: 12px; }
.tab:first-of-type .fav { margin-right: 11px; }
.doc { width: 16px; height: 20px; margin-right: 14px; }
.title { flex: 1; min-width: 0; line-height: 24px; overflow: hidden; white-space: nowrap; margin-top: -2px; }
.fade { font-size: 14.800px; margin-right: 13px; -webkit-mask-image: linear-gradient(90deg, #000 90%, transparent); mask-image: linear-gradient(90deg, #000 90%, transparent); }
.x { width: 12px; height: 12px; }
.newtab { width: 18px; height: 18px; margin-left: 18px; }
.winctl { margin: 0 1px 0 auto; display: flex; }
.winctl svg { width: 57px; height: 14px; }

.addressbar { height: 48px; flex: none; display: flex; align-items: center; padding: 0 0 1px 7px; background: #ededed; }
.addressbar svg { fill: none; stroke: #161616; stroke-width: 1.500; }
.nav, .tool { width: 55px; display: flex; justify-content: center; }
.nav svg, .cell svg { width: 23px; height: 23px; }
.tool { width: 55.300px; }
.tool svg { width: 23px; height: 23px; }
.tool.lead { margin-left: 7px; }
.pill { width: 1405px; height: 38px; margin-left: 8px; padding: 0 7px 0 22px; border-radius: 19px; background: #f5f5f5; display: flex; align-items: center; box-shadow: 0 1px 3px #d5d5d5; }
.info { width: 20px; height: 20px; margin-right: 19px; }
.url { color: #6c6c6c; font-size: 17.500px; line-height: 26px; }
.url b { font-weight: 400; color: #151515; }
.cell { width: 50px; display: flex; justify-content: center; }
.cell.first { margin-left: auto; }
.pill .cell svg { stroke: #6b6b6b; }
.copilot { width: 50px; display: flex; justify-content: center; }
.copilot svg { width: 31px; height: 31px; stroke: none; }

.middle { height: 954px; flex: none; display: flex; padding-left: 5px; }
.page { width: 1860px; height: 950px; border-radius: 9px; overflow: hidden; display: flex; box-shadow: 0 0 3px #bbb; }
.side { width: 263px; flex: none; background: #2e3f55; color: #bfcbd9; }
.brand { height: 73px; display: flex; align-items: center; padding: 0 0 1px 6px; color: #f4f4f4; background: #2e3f55; }
.brand svg { width: 38px; height: 38px; }
.brand strong { margin: -1px 0 0 12px; line-height: 26px; }
.item { height: 70px; display: flex; align-items: center; padding: 4px 26px 0 27px; }
.item span { line-height: 26px; }
.mi { width: 20px; height: 19px; margin-right: 14px; color: #929599; }
.mi.db { height: 17px; }
.dark { background: #1f2b3b; }
.open { background: #243342; }
.sub { height: 62px; background: #1f2b3a; padding-left: 52px; }
.current { height: 63px; padding-top: 3px; background: #001428; color: #3d97f2; }
.current .mi { color: #3d97f2; }
.arr { width: 12px; height: 8px; margin: -7px 0 0 auto; color: #929599; }

.main { flex: 1; min-width: 0; display: flex; flex-direction: column; background: #e7e7e7; }
.top { height: 75px; flex: none; display: flex; align-items: center; padding: 0 0 1px 28px; background: #f5f5f5; border-bottom: 1px solid #c8ccd4; }
.burger { width: 16px; height: 16px; }
.crumbs { display: flex; align-items: center; margin: -6px 0 0 32px; }
.crumbs span { line-height: 26px; margin-top: -1px; }
.crumbs i { width: 30px; text-align: center; color: #b5b9c1; font-size: 20px; line-height: 26px; margin-top: -1px; }
.crumbs i.tight { width: 25px; }
.hm { width: 21px; height: 21px; }
.crumbs .first { margin-left: 6px; }
.dbi { width: 17px; height: 19px; margin-right: 5px; }
.acts { display: flex; align-items: center; margin: 0 39px 0 auto; }
.glyph { font: bold 22px/24px "Liberation Serif", serif; width: 16px; text-align: center; }
.exp { width: 17px; height: 17px; margin-left: 48px; }
.hm2 { width: 22px; height: 21px; margin-left: 46px; }
.pal { width: 19px; height: 19px; margin-left: 66px; }
.theme { margin-left: 16px; line-height: 26px; margin-top: -1px; }
.dn { width: 14px; height: 9px; margin-left: 8px; }
.usr { width: 16px; height: 19px; margin-left: 70px; }
.adm { margin-left: 5px; font-family: "Liberation Sans", sans-serif; line-height: 26px; }
.d2 { margin-left: 9px; }

.pagetabs { height: 48px; flex: none; display: flex; background: #eceef2; border-bottom: 1px solid #dcdfe6; color: #8b8e94; }
.pt { display: flex; align-items: center; height: 48px; }
.pt span { line-height: 26px; margin-top: -1px; }
.cx { width: 11px; height: 11px; margin-left: 9px; }
.us { width: 17px; height: 19px; margin-right: 11px; }
.p1 { padding-left: 25px; width: 141px; }
.p1 span { margin-left: 10px; }
.p2 { width: 242px; }
.p3 { width: 135px; }
.p4 { width: 141px; }
.p5 { width: 166px; padding-left: 24px; background: #f5f5f5; border: solid #dcdfe6; border-width: 0 1px; color: #4595ea; }
.p5 .dbi { color: #3794f5; }

.scroller { height: 827px; display: flex; justify-content: space-between; padding: 0 1px 0 26px; }
.card { width: 1527px; margin-top: 26px; background: #f5f5f5; box-shadow: 0 0 22px rgba(0, 0, 0, .13); }
.search { height: 64px; display: flex; gap: 17px; padding: 10px 13px; background: #eee; border-bottom: 1px solid #dcdcdc; }
.field { width: 249.400px; height: 40px; border: 1px solid #c0c1c4; border-radius: 5px; background: #f5f5f5; color: #bcbfc6; display: flex; align-items: center; padding: 0 6px 0 12px; white-space: nowrap; }
.field span { overflow: hidden; line-height: 28px; margin-top: -2px; }
.field .ln { width: 16px; height: 17px; margin-right: 9px; }
.sel { padding: 0 14px 0 37px; }
.fd { width: 14px; height: 9px; margin: 5px 0 0 auto; }
.btn { height: 40px; border-radius: 4px; color: #fff; font-size: 15px; display: flex; align-items: center; justify-content: center; padding-bottom: 2px; }
.go { width: 91px; background: #3794f5; }
.go svg { width: 14px; height: 15px; margin-right: 6px; }
.ops { height: 72px; display: flex; align-items: flex-start; padding: 12px 12px 0 38px; font-size: 16.250px; color: #606266; }
.ops > span, .ops > a { line-height: 26px; margin-top: 6px; }
.ops a { color: #4894e6; }
.add { width: 94px; background: #3794f5; }
.add svg { width: 14px; height: 14px; margin-right: 11px; }
.del { width: 91px; margin-left: 17px; background: #f47466; }
.del svg { width: 13px; height: 14px; margin-right: 7px; }
.t1 { margin-left: 25px; }
.t2, .t3, .t4 { margin-left: 20px; white-space: nowrap; }
.group { display: flex; width: 161px; height: 41px; margin-left: auto; border: 1px solid #d5d6d8; border-radius: 4px; color: #4894e6; }
.group span { flex: 1; display: flex; align-items: center; justify-content: center; padding-bottom: 2px; }
.group span + span { border-left: 1px solid #d5d6d8; }
.group svg { width: 14px; height: 14px; }
.table { margin: 0 25px; }
.row { display: grid; grid-template-columns: 51px 186.500px 468.500px 111px 332.500px 226.500px 1fr; align-items: center; }
.head { height: 41px; background: #efefef; border: solid #dadada; border-width: 1px 0; font-size: 13.750px; }
.head b { padding: 1px 0 0 2.500px; line-height: 22px; color: #5e6064; }
.head b.lk { color: #4092ea; }
.check { width: 15px; height: 15px; margin: 0 0 4px 13px; border: 1px solid #77787a; border-radius: 3px; background: #f7f7f7; }
.data { height: 110px; font-size: 16.250px; color: #303236; }
.data > span { line-height: 26px; white-space: nowrap; margin-top: -2px; }
.data .check { margin-bottom: 5px; }
.even { background: #eee; }
.logo { width: 85px; height: 85px; margin-bottom: 5px; }
.logo.boxed { background: #f5f5f5; }
.logo svg { width: 85px; height: 85px; }
.vbar { width: 18px; height: 827px; background: #f1f1f1; display: flex; flex-direction: column; align-items: center; padding: 12px 0; }
.vbar svg { width: 13px; height: 8px; }
.vbar i { width: 11px; height: 56px; border-radius: 6px; background: #878787; margin-top: 9px; }
.vbar .dnarr { margin-top: auto; }

.rail { width: 55px; display: flex; flex-direction: column; align-items: center; padding: 2px 1px 0 0; }
.ri { height: 50.200px; display: flex; align-items: center; }
.ri svg { width: 22px; height: 24px; }
.rail hr { width: 35px; height: 1px; border: 0; margin: 0; background: #c3c3c3; }
.rail .h1 { margin-top: 15px; }
.rp { width: 16px; height: 16px; margin-top: 31px; color: #333; }
.snip { width: 22px; height: 19px; margin-top: auto; }
.rail .h2 { margin: 18px 0 16px; }
.gear { width: 23px; height: 23px; margin-bottom: 15px; }

.taskbar { height: 38px; flex: none; display: flex; background: #1c1c1c; color: #f2f2f2; font-size: 15.500px; padding-left: 12px; }
.win { width: 21px; height: 21px; margin: 8px 17px 0 0; }
.task { width: 162.900px; height: 38px; padding: 0 8px; display: flex; align-items: center; position: relative; }
.task::after { content: ""; position: absolute; left: 4px; bottom: 0; width: 152px; height: 3px; background: #6fabe0; }
.task.on { background: #474747; }
.task.on::after { left: 0; width: 163px; }
.task svg { width: 20px; height: 20px; margin-right: 4px; }
.task .fit { line-height: 24px; }
.tray { flex: 1; display: flex; align-items: center; padding-top: 2px; }
.t-up { width: 16px; height: 10px; margin-left: 8px; }
.t-bat { width: 20px; height: 16px; margin-left: 12px; }
.t-wifi { width: 17px; height: 15px; margin-left: 12px; }
.t-sh { width: 17px; height: 19px; margin-left: 11px; }
.t-vol { width: 18px; height: 16px; margin-left: 12px; }
.en { margin-left: 10px; font-size: 20px; line-height: 24px; width: 20px; flex: none; }
.py { margin-left: 18px; width: 19px; height: 19px; flex: none; background: #f4f4f4; color: #111; font-size: 16px; line-height: 18px; text-align: center; }
.clock { margin-left: 24px; line-height: 24px; white-space: nowrap; }
.t-msg { width: 20px; height: 19px; margin-left: 24px; }

.shade { position: absolute; left: 1318px; top: 719px; width: 172px; height: 197px; background: rgba(0, 0, 0, .52); border: 1px solid rgba(180, 180, 180, .25); }
.meter { position: absolute; left: 1566px; top: 0; width: 74px; height: 14px; }
.hand { position: absolute; left: 311px; top: 444px; width: 23px; height: 31px; }
.pull { position: absolute; left: 1890px; top: 802px; width: 30px; height: 40px; border-radius: 20px 0 0 20px; background: linear-gradient(90deg, #6aa4f6, #2f7df0); display: flex; align-items: center; justify-content: flex-end; padding-right: 9px; }
.pull svg { width: 8px; height: 14px; }
.mark { position: absolute; left: 1374px; top: 1023px; display: flex; font-size: 37px; line-height: 46px; font-weight: 300; color: rgba(205, 205, 205, .85); text-shadow: 1px 1px 1px rgba(60, 60, 60, .6); white-space: nowrap; }
</style>
